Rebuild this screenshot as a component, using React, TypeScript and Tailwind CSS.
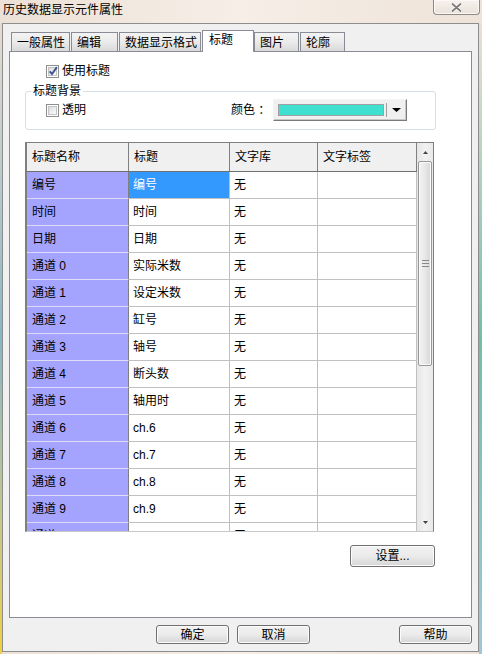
import React from "react";

const rows = [
  ["编号", "编号"],
  ["时间", "时间"],
  ["日期", "日期"],
  ["通道 0", "实际米数"],
  ["通道 1", "设定米数"],
  ["通道 2", "缸号"],
  ["通道 3", "轴号"],
  ["通道 4", "断头数"],
  ["通道 5", "轴用时"],
  ["通道 6", "ch.6"],
  ["通道 7", "ch.7"],
  ["通道 8", "ch.8"],
  ["通道 9", "ch.9"],
  ["通道 10", "ch.10"],
];

const tabs = [
  { label: "一般属性", w: "w-[59px]" },
  { label: "编辑", w: "w-[47px]" },
  { label: "数据显示格式", w: "w-[82px]" },
  { label: "标题", w: "w-[52px]", active: true },
  { label: "图片", w: "w-[45px]" },
  { label: "轮廓", w: "w-[45px]" },
];

const Checkbox = ({ checked }: { checked?: boolean }) => (
  <div className="w-[13px] h-[13px] border border-[#8e8f8f] bg-white p-[1px] shrink-0">
    <div className="w-full h-full border border-[#c3c3c3] bg-gradient-to-br from-[#dcdcdc] to-[#fbfbfb] relative">
      {checked && (
        <svg viewBox="0 0 9 9" className="absolute -left-[1px] -top-[2px] w-[10px] h-[10px]">
          <path d="M1.5 4.8 L3.6 7.2 L8 1" fill="none" stroke="#3d5597" strokeWidth="1.8" />
        </svg>
      )}
    </div>
  </div>
);

const Button = ({ label, w }: { label: string; w: string }) => (
  <div
    className={`${w} h-[19px] rounded-[3px] border border-[#707070] bg-gradient-to-b from-[#f2f2f2] via-[#ebebeb] to-[#d6d6d6] flex items-center justify-center text-[12px] leading-none shadow-[inset_0_0_0_1px_#fcfcfc]`}
  >
    {label}
  </div>
);

export default function App() {
  return (
    <div className="w-[482px] h-[654px] overflow-hidden flex flex-col bg-gradient-to-r from-[#ece1d6] via-[#f6eee7] to-[#eee3d8] font-['Liberation_Sans','Noto_Sans_CJK_SC',sans-serif] text-black select-none">
      {/* title bar */}
      <div className="h-[23px] flex items-start relative">
        <div className="pl-[3px] pt-[3px] text-[12px] leading-[14px]">历史数据显示元件属性</div>
        <div className="absolute right-[2px] top-0 w-[47px] h-[15px] rounded-b-[4px] border border-t-0 border-[#8c8a87] bg-gradient-to-b from-[#f7f2ee] to-[#e9e1d9] flex items-center justify-center shadow-[inset_0_0_0_1px_#fbf8f5]">
          <svg viewBox="0 0 11 9" className="w-[11px] h-[9px]">
            <path d="M1.5 1 L9.5 8 M9.5 1 L1.5 8" stroke="#ffffff" strokeWidth="3.4" strokeLinecap="round" />
            <path d="M1.5 1 L9.5 8 M9.5 1 L1.5 8" stroke="#7d7b7a" strokeWidth="1.8" strokeLinecap="round" />
          </svg>
        </div>
      </div>

      <div className="flex">
        {/* colourful desktop bleed on the left edge */}
        <div className="w-[2px] h-[631px] bg-gradient-to-b from-[#e6dbd1] via-[#86b7c4] to-[#f0d03a]" />
        <div className="w-[477px] h-[629px] border border-[#8d8d8d] bg-[#f0f0f0] flex flex-col">
          {/* tabs */}
          <div className="flex items-end h-[27px] pl-[8px]">
            {tabs.map((t) =>
              t.active ? (
                <div
                  key={t.label}
                  className={`${t.w} h-[22px] -mb-px relative z-10 bg-white border border-b-0 border-[#898c95] text-[12px] leading-[14px] pl-[6px] pt-[2px]`}
                >
                  {t.label}
                </div>
              ) : (
                <div
                  key={t.label}
                  className={`${t.w} h-[19px] mr-px border border-b-0 border-[#898c95] bg-gradient-to-b from-[#f3f3f3] via-[#ebebeb] to-[#d9d9d9] text-[12px] leading-[14px] pl-[5px] pt-[3px]`}
                >
                  {t.label}
                </div>
              )
            )}
          </div>

          {/* panel */}
          <div className="ml-[6px] w-[463px] h-[567px] border border-[#898c95] bg-white pl-[15px] flex flex-col">
            <div className="mt-[12px] ml-[21px] flex items-center gap-[3px] h-[15px]">
              <Checkbox checked />
              <span className="text-[12px] leading-[15px]">使用标题</span>
            </div>

            <fieldset className="mt-[5px] w-[411px] border border-[#d5dfe5] rounded-[3px] pb-[8px]">
              <legend className="ml-[5px] px-[2px] text-[12px] leading-[14px]">标题背景</legend>
              <div className="mt-[1px] h-[22px] flex items-center">
                <div className="w-[205px] pl-[20px] flex items-center gap-[3px]">
                  <Checkbox />
                  <span className="text-[12px] leading-[15px]">透明</span>
                </div>
                <div className="w-[42px] text-[12px] leading-[15px]">颜色 ：</div>
                <div className="w-[134px] h-[22px] border border-t-[#f4f4f4] border-l-[#f4f4f4] border-r-[#7a7a7a] border-b-[#7a7a7a] bg-[#f0f0f0] flex items-center shadow-[inset_-1px_-1px_0_#c8c8c8]">
                  <div className="ml-[4px] w-[106px] h-[12px] border border-[#a0a0a0] bg-[#40e0d0]" />
                  <div className="ml-[2px] w-px h-[14px] bg-[#a0a0a0]" />
                  <svg viewBox="0 0 9 4" className="ml-[5px] w-[9px] h-[4px]">
                    <path d="M0 0 L9 0 L4.5 4 Z" fill="#000" />
                  </svg>
                </div>
              </div>
            </fieldset>

            {/* grid */}
            <div className="mt-[12px] w-[409px] h-[390px] border border-l-2 border-[#7f7f7f] border-b-[#c8c8c8] flex">
              <div className="w-[390px] flex flex-col overflow-hidden">
                <div className="h-[29px] shrink-0 grid grid-cols-[102px_101px_88px_99px] bg-[#f0f0f0] border-b border-[#6f6f6f] text-[12px]">
                  {["标题名称", "标题", "文字库", "文字标签"].map((h) => (
                    <div key={h} className="border-r border-[#808080] pl-[5px] flex items-center leading-[14px]">
                      {h}
                    </div>
                  ))}
                </div>
                {rows.map(([a, b], i) => (
                  <div key={a} className="h-[27px] shrink-0 grid grid-cols-[102px_101px_88px_99px] text-[12px] leading-[14px]">
                    <div className="bg-[#a4a4ff] border-r border-[#7f7f7f] border-b border-b-[#dcdcf2] pl-[5px] flex items-center">
                      {a}
                    </div>
                    <div
                      className={`border-r border-b border-[#c0c0c0] pl-[4px] flex items-center ${
                        i === 0 ? "bg-[#3399ff] text-white" : "bg-white"
                      }`}
                    >
                      {b}
                    </div>
                    <div className="border-r border-b border-[#c0c0c0] pl-[4px] flex items-center bg-white">无</div>
                    <div className="border-r border-b border-[#c0c0c0] bg-white" />
                  </div>
                ))}
              </div>

              {/* scrollbar */}
              <div className="w-[16px] flex flex-col bg-gradient-to-r from-[#e6e6e6] via-[#f2f2f2] to-[#e9e9e9]">
                <div className="h-[18px] flex items-center justify-center">
                  <svg viewBox="0 0 5 3" className="w-[5px] h-[3px]">
                    <path d="M0 3 L5 3 L2.5 0 Z" fill="#444" />
                  </svg>
                </div>
                <div className="mx-px h-[205px] rounded-[2px] border border-[#979797] bg-gradient-to-r from-[#f3f3f3] via-[#e8e8e8] to-[#d6d6d6] flex flex-col items-center justify-center gap-[2px] shadow-[inset_0_0_0_1px_#fbfbfb]">
                  <div className="w-[7px] h-px bg-[#888]" />
                  <div className="w-[7px] h-px bg-[#888]" />
                  <div className="w-[7px] h-px bg-[#888]" />
                </div>
                <div className="flex-1" />
                <div className="h-[18px] flex items-center justify-center">
                  <svg viewBox="0 0 5 3" className="w-[5px] h-[3px]">
                    <path d="M0 0 L5 0 L2.5 3 Z" fill="#444" />
                  </svg>
                </div>
              </div>
            </div>

            <div className="mt-[13px] ml-[325px]">
              <div className="w-[85px] h-[22px] rounded-[3px] border border-[#707070] bg-gradient-to-b from-[#f2f2f2] via-[#ebebeb] to-[#d6d6d6] flex items-center justify-center text-[12px] leading-none shadow-[inset_0_0_0_1px_#fcfcfc]">
                设置...
              </div>
            </div>
          </div>

          {/* bottom buttons */}
          <div className="mt-[7px] flex">
            <div className="ml-[153px]">
              <Button label="确定" w="w-[73px]" />
            </div>
            <div className="ml-[8px]">
              <Button label="取消" w="w-[73px]" />
            </div>
            <div className="ml-[89px]">
              <Button label="帮助" w="w-[73px]" />
            </div>
          </div>
        </div>
        <div className="w-[3px] h-[631px] bg-gradient-to-b from-[#e9dfd5] via-[#6fbfa8] to-[#9fc7d6]" />
      </div>
    </div>
  );
}
